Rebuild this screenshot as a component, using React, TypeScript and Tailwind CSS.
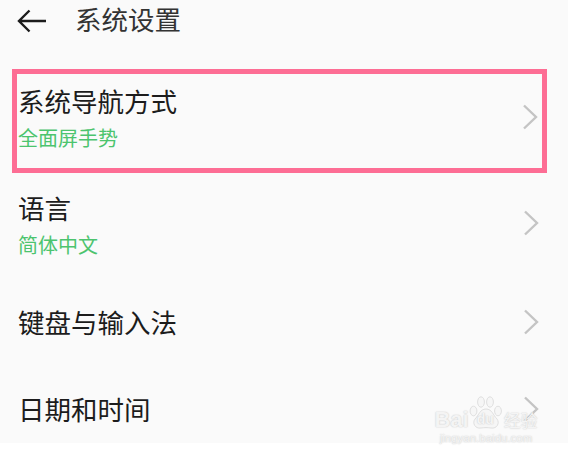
const FONT = "font-['Noto_Sans_CJK_SC','Noto_Sans',sans-serif]";

function Chevron() {
  return (
    <svg width="16" height="26" viewBox="0 0 16 26" fill="none" stroke="#c4c4c4" strokeWidth="2.4" className="shrink-0">
      <path d="M2 1.5 L14 13 L2 24.5" />
    </svg>
  );
}

function Row({ title, sub, className = '', textClass = '' }: { title: string; sub?: string; className?: string; textClass?: string }) {
  return (
    <div className={`flex items-center justify-between pl-[18px] pr-[29px] ${className}`}>
      <div className={`flex flex-col ${textClass}`}>
        <span className="text-[26.5px] leading-[36px] text-[#1c1c1c]">{title}</span>
        {sub && <span className="text-[20px] leading-[28px] mt-[5px] text-[#4cc46e]">{sub}</span>}
      </div>
      <Chevron />
    </div>
  );
}

function Watermark() {
  return (
    <div className="absolute left-[434px] top-[396px] w-[104px] flex flex-col items-center text-[#f4f4f4] [text-shadow:0_0_1.5px_#bdbdbd] font-['Liberation_Sans',sans-serif]">
      <div className="flex items-end h-[34px]">
        <span className="text-[22px] leading-[20px] font-bold">Bai</span>
        <div className="relative w-[34px] h-[34px]">
          <svg width="34" height="34" viewBox="0 0 34 34" fill="#f6f6f6" stroke="#d8d8d8" strokeWidth="0.8">
            <ellipse cx="4.5" cy="15" rx="3.4" ry="4.8" />
            <ellipse cx="12" cy="6" rx="3.4" ry="5.2" />
            <ellipse cx="21" cy="6" rx="3.4" ry="5.2" />
            <ellipse cx="29" cy="15" rx="3.4" ry="4.8" />
            <path d="M17 13 C11 13 10 19 6 23 C3 27 6 33 12 32 C15 31.5 19 31.5 22 32 C28 33 31 27 28 23 C24 19 23 13 17 13Z" />
          </svg>
          <span className="absolute left-[8px] bottom-[2px] text-[14px] leading-[18px] font-bold">du</span>
        </div>
        <span className="text-[17px] leading-[20px] font-['Noto_Sans_CJK_SC',sans-serif] ml-[1px] whitespace-nowrap">经验</span>
      </div>
      <span className="text-[11.5px] leading-[14px] mt-[1px] whitespace-nowrap">jingyan.baidu.com</span>
    </div>
  );
}

export default function App() {
  return (
    <div className={`relative w-[568px] h-[458px] bg-white overflow-hidden ${FONT}`}>
      <div className="h-[443px] bg-[#fafafa] overflow-hidden flex flex-col">
        <div className="h-[69px] shrink-0 flex items-center gap-[29px] pl-[17px] pb-[32px]">
          <svg width="29" height="24" viewBox="0 0 29 24" fill="none" stroke="#1c1c1c" strokeWidth="2.4" className="mt-[4px]">
            <path d="M29 12 L2 12 M12.5 1.5 L2 12 L12.5 22.5" />
          </svg>
          <span className="text-[26.5px] leading-[36px] text-[#333333]">系统设置</span>
        </div>
        <div className="ml-[12px] mr-[21px] h-[104px] shrink-0 border-[5px] border-[#fd6d94]">
          <Row title="系统导航方式" sub="全面屏手势" className="h-full !pl-[1px] !pr-[4px] pb-[8px]" />
        </div>
        <Row title="语言" sub="简体中文" className="h-[99px] shrink-0" textClass="pt-[4px]" />
        <Row title="键盘与输入法" className="h-[87px] shrink-0 mt-[6px]" />
        <Row title="日期和时间" className="h-[87px] shrink-0" />
      </div>
      <Watermark />
    </div>
  );
}
